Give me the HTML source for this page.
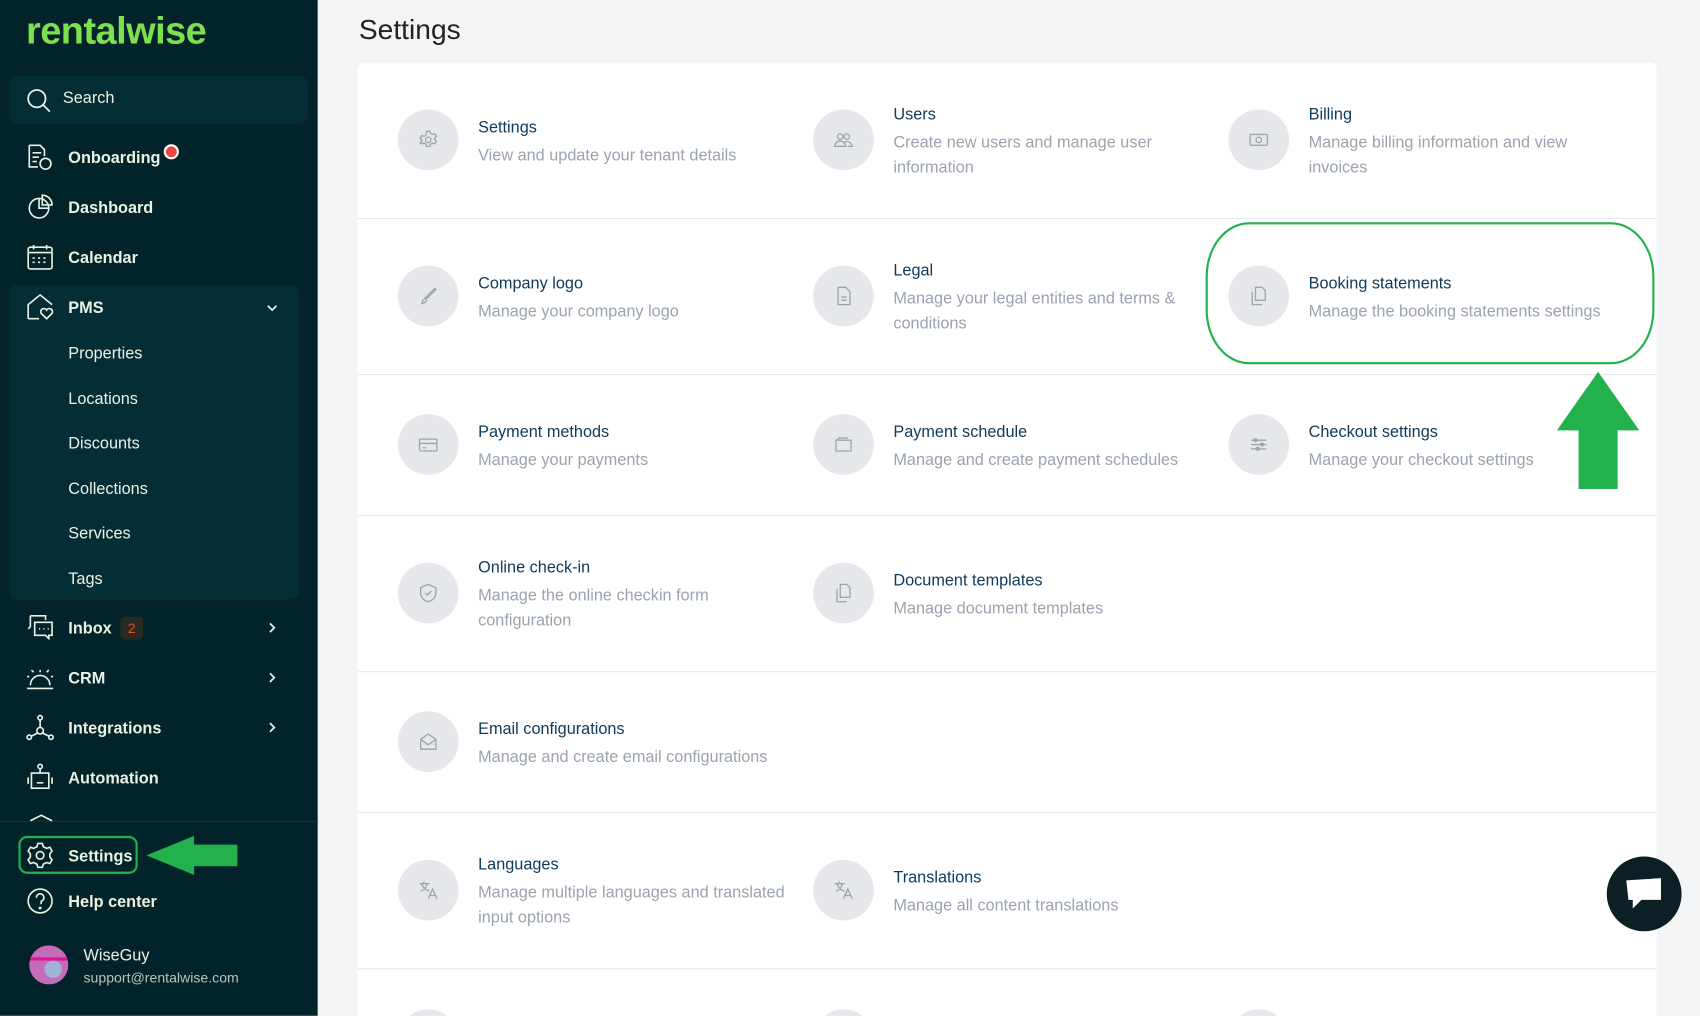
<!DOCTYPE html>
<html><head><meta charset="utf-8"><style>
*{box-sizing:border-box;margin:0;padding:0}
html,body{width:1700px;height:1016px;overflow:hidden;background:#f3f4f6}
#w{width:1568px;height:937px;transform:scale(1.08418);transform-origin:0 0;position:relative;font-family:"Liberation Sans",sans-serif;overflow:hidden}
.sb{position:absolute;left:0;top:0;width:293px;height:937px;background:#03232b}
.logo{position:absolute;left:24px;top:9px;font-size:35px;font-weight:bold;color:#7ee04f;letter-spacing:-0.5px}
.search{position:absolute;left:8px;top:70px;width:276px;height:44px;background:#052d35;border-radius:8px}
.it{position:absolute;left:63px;color:#eaf2e4;font-size:15px;font-weight:bold;transform:translateY(-50%);margin-top:1px}
.sub{font-weight:normal}
.ic{position:absolute;left:24px;width:26px;height:26px;transform:translateY(-50%)}
.pms{position:absolute;left:8px;top:263px;width:268px;height:290px;background:#052d35;border-radius:8px}
.chev{position:absolute;left:245px;width:12px;height:12px;transform:translateY(-50%)}
h1{position:absolute;top:12px;font-size:26px;font-weight:normal;color:#222}
.card{position:absolute;left:330px;top:58px;width:1198px;height:900px;background:#fff;border-radius:6px}
.hr{position:absolute;left:330px;width:1198px;height:1px;background:#e5e7eb}
.c{position:absolute;width:56px;height:56px;border-radius:50%;background:#e5e7ea;transform:translate(-50%,-50%)}
.c svg{position:absolute;left:19px;top:19px}
.t{position:absolute;font-size:15px;color:#0e3a5b;line-height:23px;margin-top:1px}
.d{color:#9aa3ae;display:block}
</style></head><body><div id="w">
<div class="sb">
<div class="logo">rentalwise</div>
<div class="search"><svg style="position:absolute;left:16px;top:11px" width="24" height="24" fill="none" stroke="#eaf2e4" stroke-width="1.6"><circle cx="10" cy="10" r="8"/><path d="M16 16l6 6"/></svg><span style="position:absolute;left:50px;top:12px;color:#eaf2e4;font-size:15px">Search</span></div>
<div class="pms"></div>
<svg class="ic" style="top:145px" viewBox="0 0 26 26" fill="none" stroke="#eaf2e4" stroke-width="1.5"><path d="M3 2h10l4 4v6M3 2v20h8M6 9h8M6 13h6M6 17h4"/><circle cx="18" cy="19" r="5"/></svg>
<div class="it" style="top:145px">Onboarding</div><div style="position:absolute;left:151px;top:133px;width:14px;height:14px;border-radius:50%;background:#ef4444;border:2px solid #fff"></div>
<svg class="ic" style="top:191px" viewBox="0 0 26 26" fill="none" stroke="#eaf2e4" stroke-width="1.5"><circle cx="12" cy="14" r="9"/><path d="M12 5v9h9M15 2a9 9 0 0 1 9 9h-9z"/></svg>
<div class="it" style="top:191px">Dashboard</div>
<svg class="ic" style="top:237px" viewBox="0 0 26 26" fill="none" stroke="#eaf2e4" stroke-width="1.5"><rect x="2" y="4" width="22" height="20" rx="2"/><path d="M2 9h22M7 2v4M19 2v4M6 14h2M11 14h2M16 14h2M6 18h2M11 18h2M16 18h2"/></svg>
<div class="it" style="top:237px">Calendar</div>
<svg class="ic" style="top:283px" viewBox="0 0 26 26" fill="none" stroke="#eaf2e4" stroke-width="1.5"><path d="M2 24V11L13 2l11 9M2 24h10"/><path d="M19 24l-5-5a2.5 2.5 0 0 1 5-3 2.5 2.5 0 0 1 5 3z"/></svg>
<div class="it" style="top:283px">PMS</div>
<svg class="chev" style="top:284px" viewBox="0 0 12 12" fill="none" stroke="#eaf2e4" stroke-width="1.6"><path d="M2 4l4 4 4-4"/></svg>
<div class="it sub" style="top:325px">Properties</div>
<div class="it sub" style="top:367px">Locations</div>
<div class="it sub" style="top:408px">Discounts</div>
<div class="it sub" style="top:450px">Collections</div>
<div class="it sub" style="top:491px">Services</div>
<div class="it sub" style="top:533px">Tags</div>
<svg class="ic" style="top:579px" viewBox="0 0 26 26" fill="none" stroke="#eaf2e4" stroke-width="1.5"><path d="M4 2h14v4M4 2v10l-2 2M8 8h16v12h-3v3l-3-3H8z"/><path d="M12 14h1M16 14h1M20 14h1"/></svg>
<div class="it" style="top:579px">Inbox</div><div style="position:absolute;left:111px;top:569px;width:21px;height:21px;border-radius:5px;background:#2a2a22;color:#e2501f;font-size:13px;text-align:center;line-height:21px">2</div>
<svg class="chev" style="top:579px" viewBox="0 0 12 12" fill="none" stroke="#eaf2e4" stroke-width="1.6"><path d="M4 2l4 4-4 4"/></svg>
<svg class="ic" style="top:625px" viewBox="0 0 26 26" fill="none" stroke="#eaf2e4" stroke-width="1.5"><path d="M4 20a9 9 0 0 1 18 0M1 23h24M13 8V6M5 6l2 2M21 6l-2 2M1 12h2M23 12h2"/></svg>
<div class="it" style="top:625px">CRM</div>
<svg class="chev" style="top:625px" viewBox="0 0 12 12" fill="none" stroke="#eaf2e4" stroke-width="1.6"><path d="M4 2l4 4-4 4"/></svg>
<svg class="ic" style="top:671px" viewBox="0 0 26 26" fill="none" stroke="#eaf2e4" stroke-width="1.5"><circle cx="13" cy="4" r="2"/><circle cx="3" cy="22" r="2"/><circle cx="23" cy="22" r="2"/><circle cx="13" cy="16" r="3"/><path d="M13 6v7M5 21l6-3M21 21l-6-3"/></svg>
<div class="it" style="top:671px">Integrations</div>
<svg class="chev" style="top:671px" viewBox="0 0 12 12" fill="none" stroke="#eaf2e4" stroke-width="1.6"><path d="M4 2l4 4-4 4"/></svg>
<svg class="ic" style="top:717px" viewBox="0 0 26 26" fill="none" stroke="#eaf2e4" stroke-width="1.5"><circle cx="13" cy="3" r="2"/><path d="M13 5v4M5 9h16v14H5zM2 13v6M24 13v6M10 18h6"/></svg>
<div class="it" style="top:717px">Automation</div>
<div style="position:absolute;left:0;top:757px;width:293px;height:1px;background:#0a3840"></div>
<svg style="position:absolute;left:27px;top:750px" width="22" height="8" fill="none" stroke="#eaf2e4" stroke-width="1.5"><path d="M1 7l10-5 10 5"/></svg>
<div style="position:absolute;left:17px;top:771px;width:110px;height:35px;border:2px solid #22b14c;border-radius:8px"></div>
<svg class="ic" style="top:789px" viewBox="0 0 26 26" fill="none" stroke="#eaf2e4" stroke-width="1.5"><path d="M11 2h4l1 3 3 1.5 3-1 2 3.5-2 2.5v3l2 2.5-2 3.5-3-1-3 1.5-1 3h-4l-1-3-3-1.5-3 1-2-3.5 2-2.5v-3l-2-2.5 2-3.5 3 1L10 5z"/><circle cx="13" cy="13" r="3.5"/></svg>
<div class="it" style="top:789px">Settings</div>
<svg style="position:absolute;left:135px;top:771px" width="84" height="36"><path d="M0 18L44 0v8h40v20H44v8z" fill="#22b14c"/></svg>
<svg class="ic" style="top:831px" viewBox="0 0 26 26" fill="none" stroke="#eaf2e4" stroke-width="1.5"><circle cx="13" cy="13" r="11"/><path d="M9.5 10a3.5 3.5 0 1 1 4.5 3.3V16"/><circle cx="13" cy="19.5" r=".6"/></svg>
<div class="it" style="top:831px">Help center</div>
<div style="position:absolute;left:27px;top:872px;width:36px;height:36px;border-radius:50%;background:#c46cb8;overflow:hidden"><div style="position:absolute;left:14px;top:14px;width:16px;height:16px;border-radius:50%;background:#9fb3d9"></div><div style="position:absolute;left:0;top:11px;width:36px;height:3px;background:#e0149a"></div></div>
<div style="position:absolute;left:77px;top:873px;color:#eaf2e4;font-size:15px">WiseGuy</div>
<div style="position:absolute;left:77px;top:894px;color:#b8c4bc;font-size:13px">support@rentalwise.com</div>
</div>
<h1 style="left:331px">Settings</h1>
<div class="card"></div>
<div class="hr" style="top:201px"></div><div class="hr" style="top:345px"></div><div class="hr" style="top:475px"></div><div class="hr" style="top:619px"></div><div class="hr" style="top:749px"></div><div class="hr" style="top:893px"></div>

<div class="c" style="left:395px;top:129px"><svg width="18" height="18" fill="none" stroke="#9aa3ae" stroke-width="1.2"><circle cx="9" cy="9" r="2.5"/><path d="M7.5 1h3l.5 2 2 1 2-.7 1.5 2.5-1.5 1.5v1.4l1.5 1.5-1.5 2.5-2-.7-2 1-.5 2h-3l-.5-2-2-1-2 .7L1.5 12 3 10.5V9L1.5 7.5 3 5l2 .7 2-1z"/></svg></div>
<div class="t" style="left:441px;top:105px">Settings<span class="d" style="margin-top:3px">View and update your tenant details</span></div>
<div class="c" style="left:778px;top:129px"><svg width="18" height="18" fill="none" stroke="#9aa3ae" stroke-width="1.2"><circle cx="6" cy="6" r="2.5"/><circle cx="12" cy="6" r="2.5"/><path d="M1 15a5 5 0 0 1 10 0zM10 11a5 5 0 0 1 7 4h-4"/></svg></div>
<div class="t" style="left:824px;top:93px">Users<span class="d" style="margin-top:3px">Create new users and manage user<br>information</span></div>
<div class="c" style="left:1161px;top:129px"><svg width="18" height="18" fill="none" stroke="#9aa3ae" stroke-width="1.2"><rect x="1" y="4" width="16" height="10" rx="1"/><circle cx="9" cy="9" r="2.5"/></svg></div>
<div class="t" style="left:1207px;top:93px">Billing<span class="d" style="margin-top:3px">Manage billing information and view<br>invoices</span></div>

<div class="c" style="left:395px;top:273px"><svg width="18" height="18" fill="none" stroke="#9aa3ae" stroke-width="1.2"><path d="M15 2l1 1-9 9-1-1zM6 11l-2 2-1 3 3-1 2-2"/></svg></div>
<div class="t" style="left:441px;top:249px">Company logo<span class="d" style="margin-top:3px">Manage your company logo</span></div>
<div class="c" style="left:778px;top:273px"><svg width="18" height="18" fill="none" stroke="#9aa3ae" stroke-width="1.2"><path d="M4 1h7l4 4v12H4zM7 10h5M7 13h5"/></svg></div>
<div class="t" style="left:824px;top:237px">Legal<span class="d" style="margin-top:3px">Manage your legal entities and terms &amp;<br>conditions</span></div>
<div class="c" style="left:1161px;top:273px"><svg width="18" height="18" fill="none" stroke="#9aa3ae" stroke-width="1.2"><path d="M6 1h6l3 3v9H6zM3 5v12h9"/></svg></div>
<div class="t" style="left:1207px;top:249px">Booking statements<span class="d" style="margin-top:3px">Manage the booking statements settings</span></div>
<div style="position:absolute;left:1112px;top:205px;width:414px;height:131px;border:2px solid #22b14c;border-radius:40px/50px"></div>
<svg style="position:absolute;left:1436px;top:343px" width="76" height="108"><path d="M38 0L76 54H56v54H20V54H0z" fill="#22b14c"/></svg>

<div class="c" style="left:395px;top:410px"><svg width="18" height="18" fill="none" stroke="#9aa3ae" stroke-width="1.2"><rect x="1" y="4" width="16" height="11" rx="1"/><path d="M1 8h16M4 12h3"/></svg></div>
<div class="t" style="left:441px;top:386px">Payment methods<span class="d" style="margin-top:3px">Manage your payments</span></div>
<div class="c" style="left:778px;top:410px"><svg width="18" height="18" fill="none" stroke="#9aa3ae" stroke-width="1.2"><path d="M2 5h14v10H2zM3 5l2-2h8"/></svg></div>
<div class="t" style="left:824px;top:386px">Payment schedule<span class="d" style="margin-top:3px">Manage and create payment schedules</span></div>
<div class="c" style="left:1161px;top:410px"><svg width="18" height="18" fill="none" stroke="#9aa3ae" stroke-width="1.2"><path d="M2 5h14M2 9h14M2 13h14"/><circle cx="6" cy="5" r="1.3"/><circle cx="12" cy="9" r="1.3"/><circle cx="8" cy="13" r="1.3"/></svg></div>
<div class="t" style="left:1207px;top:386px">Checkout settings<span class="d" style="margin-top:3px">Manage your checkout settings</span></div>

<div class="c" style="left:395px;top:547px"><svg width="18" height="18" fill="none" stroke="#9aa3ae" stroke-width="1.2"><path d="M9 1l7 3v5c0 4-3 7-7 8-4-1-7-4-7-8V4zM6 9l2 2 4-4"/></svg></div>
<div class="t" style="left:441px;top:511px">Online check-in<span class="d" style="margin-top:3px">Manage the online checkin form<br>configuration</span></div>
<div class="c" style="left:778px;top:547px"><svg width="18" height="18" fill="none" stroke="#9aa3ae" stroke-width="1.2"><path d="M6 1h6l3 3v9H6zM3 5v12h9"/></svg></div>
<div class="t" style="left:824px;top:523px">Document templates<span class="d" style="margin-top:3px">Manage document templates</span></div>

<div class="c" style="left:395px;top:684px"><svg width="18" height="18" fill="none" stroke="#9aa3ae" stroke-width="1.2"><path d="M2 7l7-5 7 5v9H2zM2 7l7 5 7-5"/></svg></div>
<div class="t" style="left:441px;top:660px">Email configurations<span class="d" style="margin-top:3px">Manage and create email configurations</span></div>

<div class="c" style="left:395px;top:821px"><svg width="18" height="18" fill="none" stroke="#9aa3ae" stroke-width="1.2"><path d="M1 3h9M5 1v2M3 3c1 4 4 6 7 7M8 3c-1 4-3 6-6 7M9 17l4-9 4 9M10.5 14h5"/></svg></div>
<div class="t" style="left:441px;top:785px">Languages<span class="d" style="margin-top:3px">Manage multiple languages and translated<br>input options</span></div>
<div class="c" style="left:778px;top:821px"><svg width="18" height="18" fill="none" stroke="#9aa3ae" stroke-width="1.2"><path d="M1 3h9M5 1v2M3 3c1 4 4 6 7 7M8 3c-1 4-3 6-6 7M9 17l4-9 4 9M10.5 14h5"/></svg></div>
<div class="t" style="left:824px;top:797px">Translations<span class="d" style="margin-top:3px">Manage all content translations</span></div>

<div class="c" style="left:395px;top:959px"></div>
<div class="c" style="left:778px;top:959px"></div>
<div class="c" style="left:1161px;top:959px"></div>

<div style="position:absolute;left:1482px;top:790px;width:69px;height:69px;border-radius:50%;background:#0b1f24"><svg style="position:absolute;left:16px;top:18px" width="36" height="34"><path d="M2 4l32-2v20H16l-8 8v-8H4z" fill="#fff"/></svg></div>
</div></body></html>
